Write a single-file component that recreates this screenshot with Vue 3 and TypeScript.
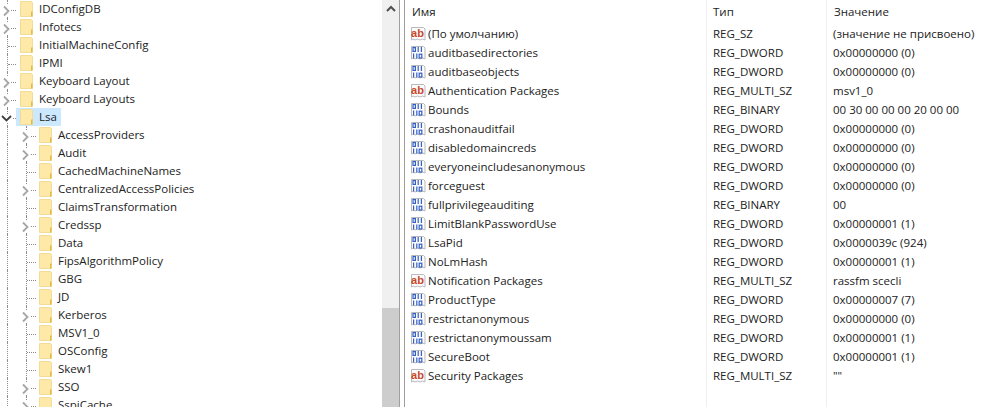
<template>
  <div class="regedit">
    <!-- Key tree -->
    <div class="tree-pane">
      <div class="tree">
        <div
          v-for="key in keys"
          :key="key.name"
          :class="['tree-row', `tree-row--l${key.level}`]"
        >
          <span class="guides">
            <span class="guide-root"></span>
            <span v-if="key.level === 1" class="guide-v"></span>
            <span class="guide-h"></span>
            <svg v-if="key.state === 'closed'" class="chevron" width="9" height="12" viewBox="0 0 9 12">
              <path d="M2 1.5l4.5 4.5-4.5 4.5" fill="none" stroke="#a6a6a6" stroke-width="1.8" />
            </svg>
            <svg v-else-if="key.state === 'open'" class="chevron chevron--open" width="11" height="9" viewBox="0 0 11 9">
              <path d="M1 2l4.5 4.5L10 2" fill="none" stroke="#404040" stroke-width="1.8" />
            </svg>
          </span>
          <span :class="['key', { 'key--selected': key.selected }]">
            <svg class="folder" width="13" height="16" viewBox="0 0 13 16">
              <path d="M0.5 0.5h11l1 1v14h-12z" fill="#fee9a8" stroke="#f3dc96" />
              <path d="M11 10.5h1.5v5H11z" fill="#e3bb45" />
            </svg>
            <span class="key-name">{{ key.name }}</span>
          </span>
        </div>
      </div>
      <div class="scrollbar">
        <svg class="scroll-up" width="12" height="8" viewBox="0 0 12 8">
          <path d="M2 6l4-4 4 4" fill="none" stroke="#505050" stroke-width="2" />
        </svg>
        <div class="scroll-thumb"></div>
      </div>
    </div>

    <div class="splitter"></div>

    <!-- Values list -->
    <div class="values-pane">
      <div class="value-head">
        <span class="col-name">Имя</span>
        <span class="col-type">Тип</span>
        <span class="col-data">Значение</span>
      </div>
      <div v-for="v in values" :key="v.name" class="value-row">
        <span class="col-name name-cell">
          <svg class="value-icon" width="16" height="16" viewBox="0 0 16 16">
            <path d="M1.5 1.5h12l1.5 1.5v11l-2.5-1-2.5 1-2.5-1-2.5 1-2-1-1.5 1z" fill="#fbfbfd" stroke="#b9b9b9" />
            <text v-if="isText(v.type)" x="7.5" y="11" text-anchor="middle" class="ab-glyph">ab</text>
            <g v-else fill="none" stroke="#3460c4" stroke-width="1.2">
              <rect x="3" y="2.6" width="2.4" height="3.8" />
              <path d="M8.2 2v5M11.4 2v5" />
              <path d="M3.6 8.6v5M6.8 8.6v5" />
              <rect x="9.2" y="9.2" width="2.6" height="3.8" />
            </g>
          </svg>
          {{ v.name }}
        </span>
        <span class="col-type">{{ v.type }}</span>
        <span class="col-data">{{ v.data }}</span>
      </div>
      <i class="col-rule col-rule--type"></i>
      <i class="col-rule col-rule--data"></i>
    </div>
  </div>
</template>

<script setup lang="ts">
interface RegKey {
  name: string;
  level: 0 | 1;
  state?: 'closed' | 'open';
  selected?: boolean;
}

interface RegValue {
  name: string;
  type: string;
  data: string;
}

const keys: RegKey[] = [
  { name: 'IDConfigDB', level: 0, state: 'closed' },
  { name: 'Infotecs', level: 0, state: 'closed' },
  { name: 'InitialMachineConfig', level: 0 },
  { name: 'IPMI', level: 0 },
  { name: 'Keyboard Layout', level: 0, state: 'closed' },
  { name: 'Keyboard Layouts', level: 0, state: 'closed' },
  { name: 'Lsa', level: 0, state: 'open', selected: true },
  { name: 'AccessProviders', level: 1, state: 'closed' },
  { name: 'Audit', level: 1, state: 'closed' },
  { name: 'CachedMachineNames', level: 1 },
  { name: 'CentralizedAccessPolicies', level: 1, state: 'closed' },
  { name: 'ClaimsTransformation', level: 1 },
  { name: 'Credssp', level: 1, state: 'closed' },
  { name: 'Data', level: 1 },
  { name: 'FipsAlgorithmPolicy', level: 1 },
  { name: 'GBG', level: 1 },
  { name: 'JD', level: 1 },
  { name: 'Kerberos', level: 1, state: 'closed' },
  { name: 'MSV1_0', level: 1 },
  { name: 'OSConfig', level: 1 },
  { name: 'Skew1', level: 1 },
  { name: 'SSO', level: 1, state: 'closed' },
  { name: 'SspiCache', level: 1, state: 'closed' }
];

const values: RegValue[] = [
  { name: '(По умолчанию)', type: 'REG_SZ', data: '(значение не присвоено)' },
  { name: 'auditbasedirectories', type: 'REG_DWORD', data: '0x00000000 (0)' },
  { name: 'auditbaseobjects', type: 'REG_DWORD', data: '0x00000000 (0)' },
  { name: 'Authentication Packages', type: 'REG_MULTI_SZ', data: 'msv1_0' },
  { name: 'Bounds', type: 'REG_BINARY', data: '00 30 00 00 00 20 00 00' },
  { name: 'crashonauditfail', type: 'REG_DWORD', data: '0x00000000 (0)' },
  { name: 'disabledomaincreds', type: 'REG_DWORD', data: '0x00000000 (0)' },
  { name: 'everyoneincludesanonymous', type: 'REG_DWORD', data: '0x00000000 (0)' },
  { name: 'forceguest', type: 'REG_DWORD', data: '0x00000000 (0)' },
  { name: 'fullprivilegeauditing', type: 'REG_BINARY', data: '00' },
  { name: 'LimitBlankPasswordUse', type: 'REG_DWORD', data: '0x00000001 (1)' },
  { name: 'LsaPid', type: 'REG_DWORD', data: '0x0000039c (924)' },
  { name: 'NoLmHash', type: 'REG_DWORD', data: '0x00000001 (1)' },
  { name: 'Notification Packages', type: 'REG_MULTI_SZ', data: 'rassfm scecli' },
  { name: 'ProductType', type: 'REG_DWORD', data: '0x00000007 (7)' },
  { name: 'restrictanonymous', type: 'REG_DWORD', data: '0x00000000 (0)' },
  { name: 'restrictanonymoussam', type: 'REG_DWORD', data: '0x00000001 (1)' },
  { name: 'SecureBoot', type: 'REG_DWORD', data: '0x00000001 (1)' },
  { name: 'Security Packages', type: 'REG_MULTI_SZ', data: '""' }
];

const isText = (type: string): boolean => type === 'REG_SZ' || type === 'REG_MULTI_SZ';
</script>

<style>
html,
body {
  margin: 0;
  background: #fff;
}
</style>

<style scoped>
.regedit {
  display: flex;
  width: 984px;
  height: 407px;
  overflow: hidden;
  background: #fff;
  color: #222;
  font-family: "Open Sans", "Liberation Sans", sans-serif;
  font-size: 11.5px;
}

.tree-pane {
  display: flex;
  width: 399px;
  flex: none;
}

.tree {
  flex: 1;
  overflow: hidden;
}

.tree-row {
  display: flex;
  height: 18px;
  white-space: nowrap;
}

.guides {
  position: relative;
  flex: none;
  width: 16px;
}

.tree-row--l1 .guides {
  width: 35px;
}

.guide-root,
.guide-v,
.guide-h {
  position: absolute;
}

.guide-root,
.guide-v {
  top: 0;
  bottom: 0;
  left: 7px;
  border-left: 1px dotted #8c8c8c;
}

.tree-row--l1 .guide-v {
  left: 26px;
}

.guide-h {
  top: 10px;
  left: 8px;
  width: 8px;
  border-top: 1px dotted #8c8c8c;
}

.tree-row--l1 .guide-h {
  left: 27px;
  width: 9px;
}

.chevron {
  position: absolute;
  top: 5px;
  left: 2px;
  background: #fff;
}

.chevron--open {
  top: 6px;
  left: 1px;
}

.tree-row--l1 .chevron {
  left: 21px;
}

.key {
  display: flex;
  align-items: center;
  height: 18px;
  padding: 0 4px;
}

.key--selected {
  background: #cce8ff;
}

.folder {
  flex: none;
  margin-right: 6px;
}

.key-name {
  padding-bottom: 2px;
}

.scrollbar {
  position: relative;
  flex: none;
  width: 17px;
  background: #f0f0f0;
}

.scroll-up {
  position: absolute;
  top: 5px;
  left: 3px;
}

.scroll-thumb {
  position: absolute;
  top: 308px;
  bottom: 0;
  left: 0;
  right: 0;
  background: #cdcdcd;
}

.splitter {
  flex: none;
  width: 6px;
  box-sizing: border-box;
  border-left: 1px solid #9f9f9f;
  border-right: 1px solid #9f9f9f;
}

.values-pane {
  position: relative;
  flex: 1;
  padding-top: 2px;
}

.value-head,
.value-row {
  display: flex;
  white-space: nowrap;
}

.value-head {
  height: 19px;
  align-items: center;
  padding-left: 7px;
  margin-bottom: 3px;
}

.value-row {
  height: 19px;
  align-items: center;
  padding-left: 5px;
}

.col-name {
  width: 303px;
  flex: none;
}

.value-head .col-name {
  width: 301px;
}

.name-cell {
  display: flex;
  align-items: center;
  gap: 2px;
}

.col-type {
  width: 120px;
  flex: none;
}

.value-head .col-type {
  width: 121px;
}

.col-data {
  flex: 1;
}

.value-icon {
  flex: none;
}

.ab-glyph {
  fill: #c8472a;
  font-family: "Liberation Sans", sans-serif;
  font-size: 11px;
  font-weight: 700;
}

.col-rule {
  position: absolute;
  top: 0;
  bottom: 0;
  width: 1px;
  background: #f0f0f0;
}

.col-rule--type {
  left: 301px;
}

.col-rule--data {
  left: 421px;
}
</style>
